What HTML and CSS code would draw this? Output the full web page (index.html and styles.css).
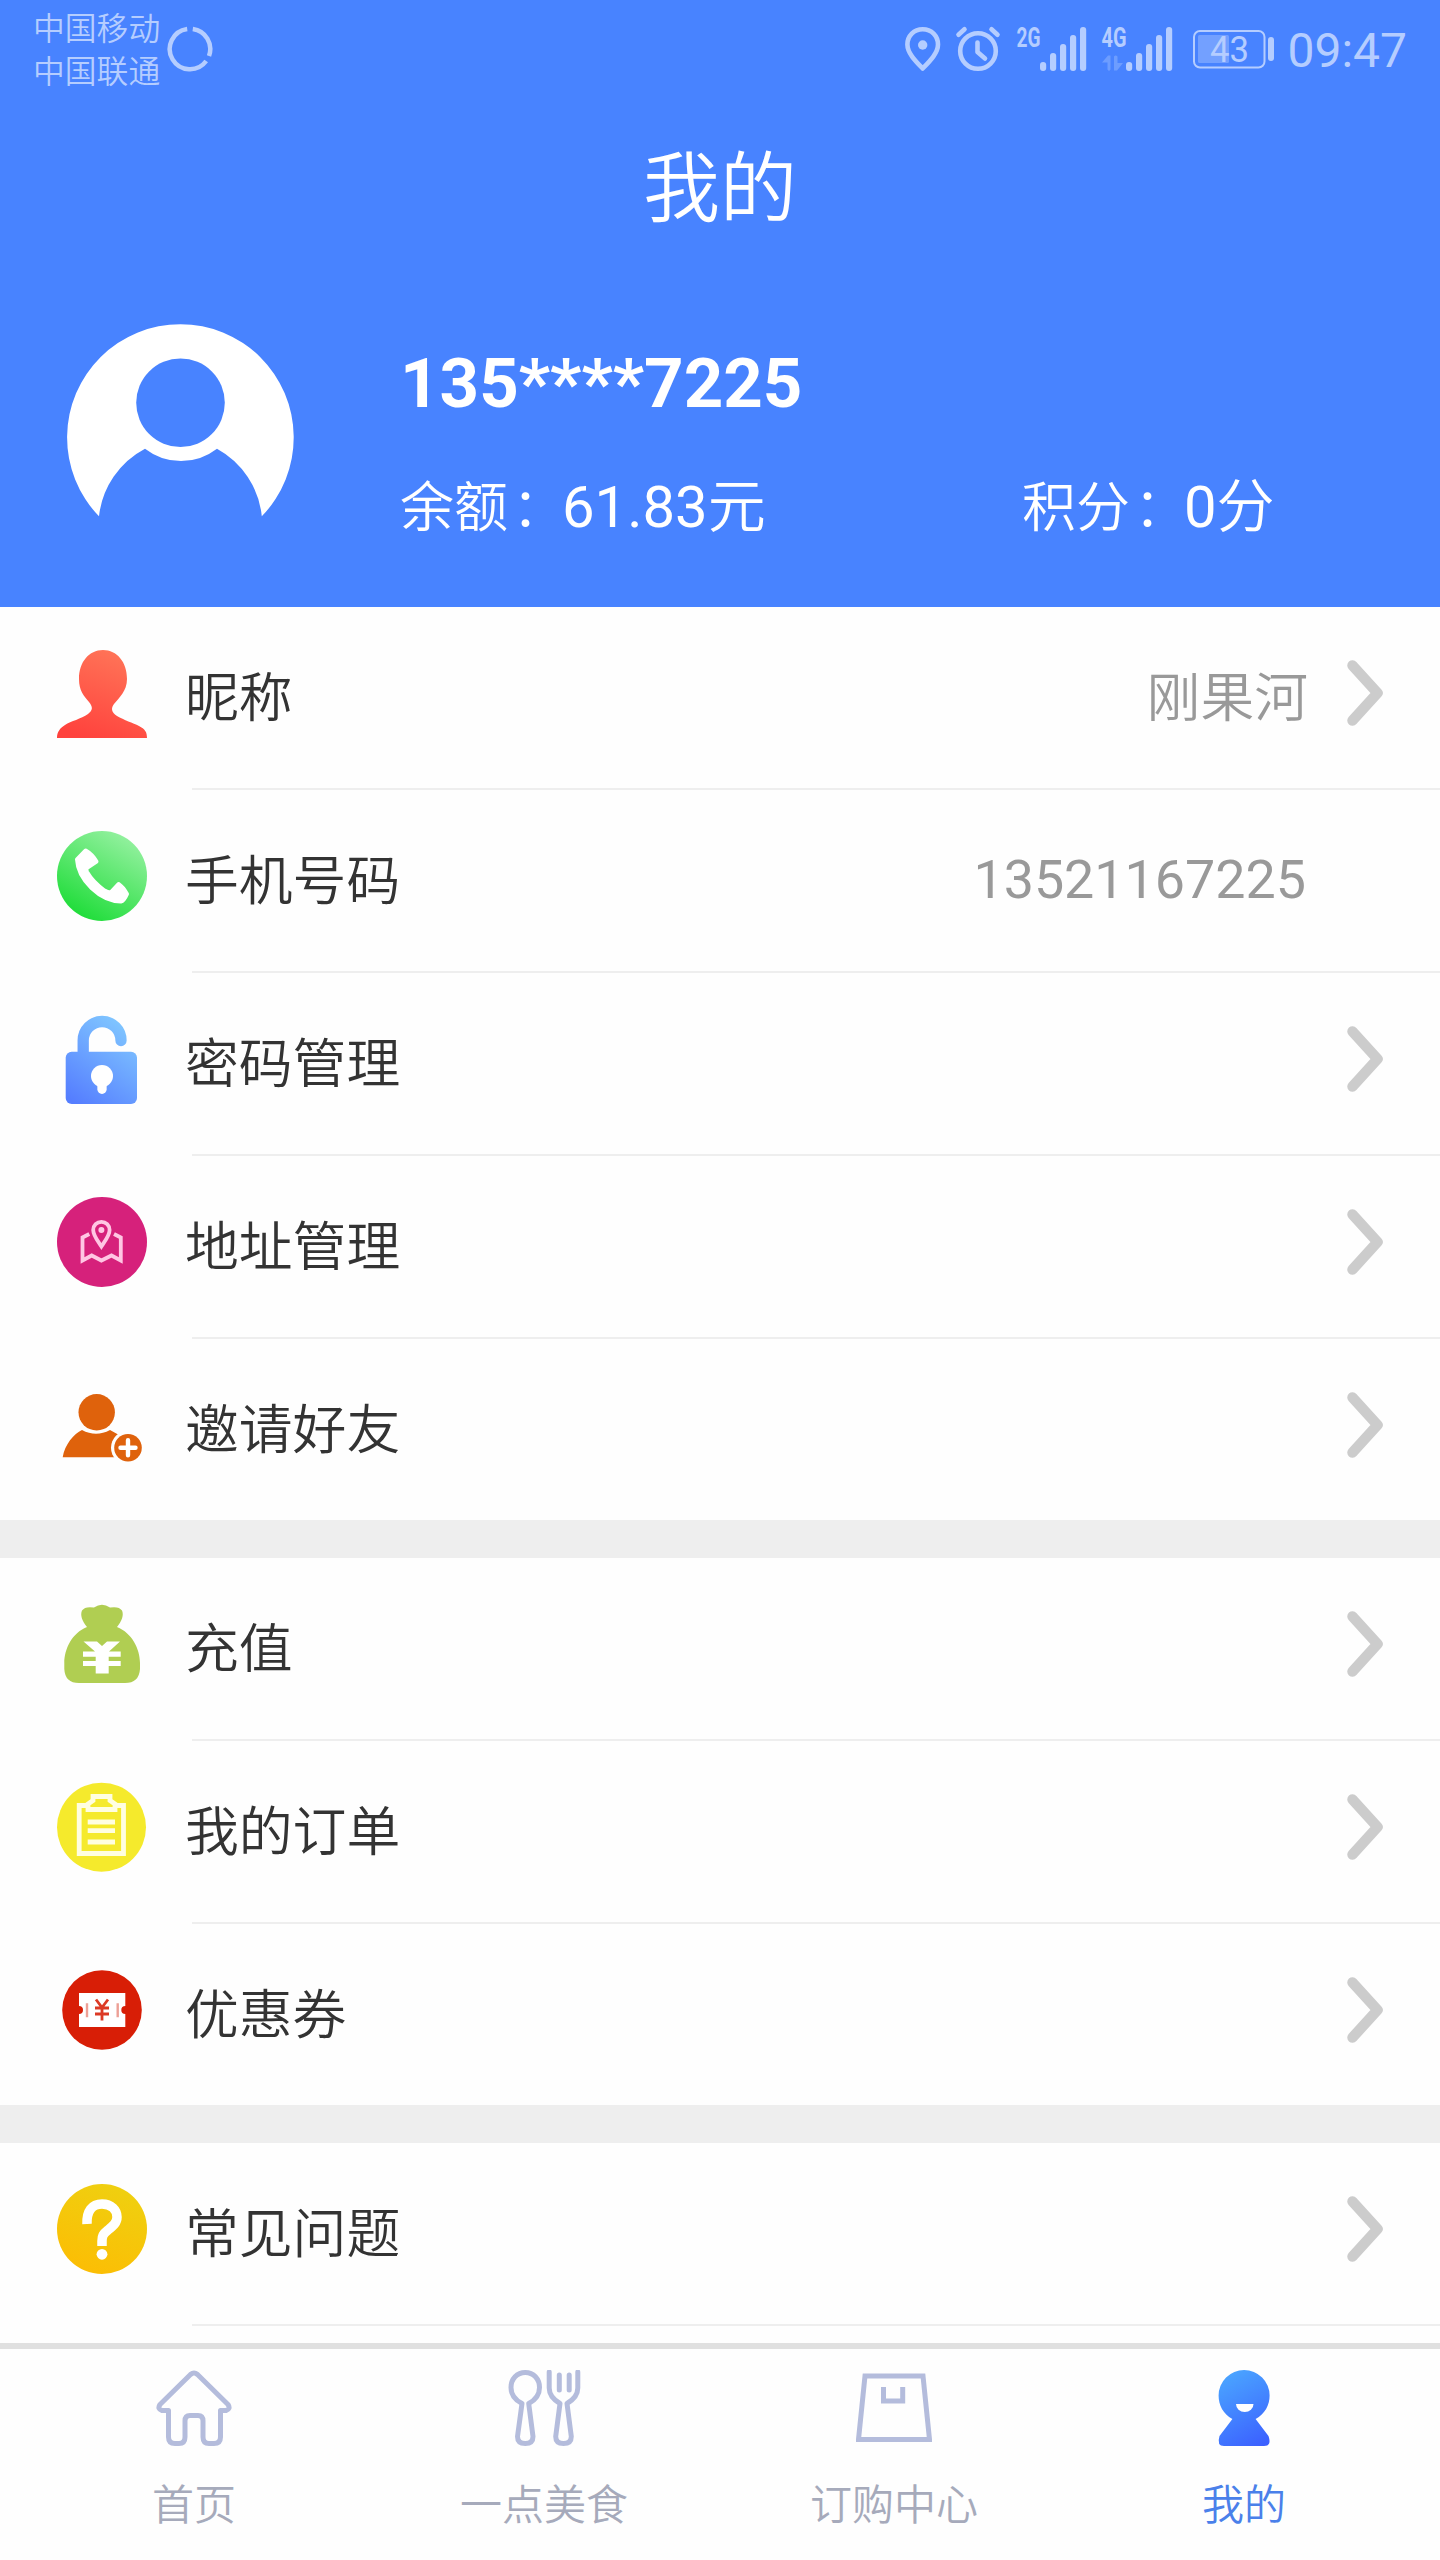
FILE: index.html
```html
<!DOCTYPE html>
<html lang="zh-CN">
<head>
<meta charset="utf-8">
<title>我的</title>
<link rel="stylesheet" href="styles.css">
</head>
<body>
<svg class="defs" width="0" height="0" aria-hidden="true">
  <defs>
    <linearGradient id="red" x1="0.3" y1="1" x2="0.7" y2="0"><stop offset="0" stop-color="#ff423d"/><stop offset="1" stop-color="#ff7558"/></linearGradient>
    <linearGradient id="green" x1="0.25" y1="0.93" x2="0.75" y2="0.07"><stop offset="0" stop-color="#21dd3b"/><stop offset="1" stop-color="#90f09c"/></linearGradient>
    <linearGradient id="blue" gradientUnits="userSpaceOnUse" x1="20" y1="90" x2="75" y2="15"><stop offset="0" stop-color="#557eff"/><stop offset="1" stop-color="#80c6ff"/></linearGradient>
    <linearGradient id="gold" x1="0.3" y1="1" x2="0.7" y2="0"><stop offset="0" stop-color="#fcbd04"/><stop offset="1" stop-color="#efd010"/></linearGradient>
    <linearGradient id="mine" gradientUnits="userSpaceOnUse" x1="18" y1="6" x2="58" y2="76"><stop offset="0" stop-color="#4aa4ff"/><stop offset="1" stop-color="#3b5fff"/></linearGradient>
    <symbol id="bars" viewBox="0 0 47 44">
      <rect x="0" y="35" width="6.2" height="9" rx="3"/><rect x="10" y="26" width="6.2" height="18" rx="3"/><rect x="20" y="17" width="6.2" height="27" rx="3"/><rect x="30" y="8" width="6.2" height="36" rx="3"/><rect x="40" y="0" width="6.2" height="44" rx="3"/>
    </symbol>
    <symbol id="chevron" viewBox="0 0 36 66"><path d="M5.5 5.5L30.5 33L5.5 60.5" fill="none" stroke="#ccc" stroke-width="10.5" stroke-linecap="round" stroke-linejoin="round"/></symbol>
  </defs>
</svg>

<header class="header">
  <div class="status">
    <div class="carriers"><span>中国移动</span><span>中国联通</span></div>
    <svg class="spinner" width="46" height="46" viewBox="-23 -23 46 46"><path d="M2.8 -20A20.2 20.2 0 0 1 19 7M16.2 12A20.2 20.2 0 1 1 -2.8 -20"/></svg>
    <svg class="status-icons" width="370" height="80" viewBox="904 8 370 80">
      <g fill="none" stroke="currentColor" stroke-width="4.6">
        <path d="M922.7 28.3C931.5 28.3 938 35 938 43.500C938 52 930 60 922.700 67.500C915.400 60 907.400 52 907.400 43.500C907.400 35 914 28.300 922.700 28.300Z" stroke-linejoin="round"/>
        <circle cx="978" cy="50" r="17.800"/>
        <path d="M958.500 33.800L964.500 28.200M991.500 28.200L997.500 33.800M977.500 41.500V51L985 57.500" stroke-linecap="round" stroke-linejoin="round"/>
      </g>
      <circle cx="922.700" cy="44" r="4.700" fill="currentColor"/>
      <g fill="currentColor">
        <text class="net" x="1016.500" y="45.700" textLength="24" lengthAdjust="spacingAndGlyphs">2G</text>
        <use href="#bars" x="1040" y="26" width="47" height="44"/>
        <text class="net" x="1101.500" y="45.700" textLength="25" lengthAdjust="spacingAndGlyphs">4G</text>
        <path d="M1102 61.500L1108 54.500H1110.500V68.500Q1109 71 1107.500 68.500V61.500ZM1114 55.500Q1115.500 53.500 1117.500 55.500V62H1123L1117 69.500H1114Z" opacity=".35"/>
        <use href="#bars" x="1126" y="26" width="47" height="44"/>
        <rect x="1198" y="34" width="31" height="28" rx="1.500" opacity=".4"/>
        <text class="charge" x="1210" y="60.700" textLength="39" lengthAdjust="spacingAndGlyphs">43</text>
        <rect x="1268" y="36" width="6" height="24" rx="3"/>
      </g>
      <rect x="1194" y="30" width="70.500" height="36.500" rx="6" fill="none" stroke="currentColor" stroke-width="2"/>
    </svg>
    <time class="clock">09:47</time>
  </div>
  <h1 class="title">我的</h1>
  <section class="profile">
    <svg class="avatar" width="227" height="193" viewBox="0 0 227 193">
      <path fill="#fff" d="M32 192.300A113.300 113.300 0 1 1 194.800 192.300A87 87 0 0 0 150 124.700A58.500 58.500 0 0 1 78 124.700A87 87 0 0 0 32 192.300Z"/>
      <circle class="avatar-head" cx="113.500" cy="78.700" r="44.300"/>
    </svg>
    <div class="account">
      <div class="phone">135****7225</div>
      <div class="figures">
        <div class="figure">余额<span class="colon">：</span><span class="amount"><b>61.83</b>元</span></div>
        <div class="figure">积分<span class="colon">：</span><span class="amount"><b>0</b>分</span></div>
      </div>
    </div>
  </section>
</header>

<main class="menu">
  <section class="group">
    <a class="row">
      <svg class="icon" viewBox="0 0 90 90"><path fill="url(#red)" d="M46 2C60 2 70 14 70 31C70 43 62 50 57 56C54 60 54 64 60 68C67 72 76 75 82 78C88 81 90 84 90 90H0C0 84 3 80 8 77C14 73 24 71 31 66C36 62 36 59 32 54C27 48 22 43 22 31C22 14 32 2 46 2Z"/></svg>
      <span class="label">昵称</span><span class="value">刚果河</span><svg class="go"><use href="#chevron"/></svg>
    </a>
    <a class="row">
      <svg class="icon" viewBox="0 0 90 90"><circle cx="45" cy="45" r="45" fill="url(#green)"/><path fill="#fff" stroke="#fff" stroke-width="4" stroke-linejoin="round" d="M28.700 19.500L20 28.500C21 49 43 70 64 70.500Q67 70 70 63Q66 56 61.500 53L54.500 60.500Q52 62.500 47.500 59.500C40 54 34 48 30 41Q28.500 38 30.500 36.500L39.500 30.500Q35 23 28.700 19.500Z"/></svg>
      <span class="label">手机号码</span><span class="value number">13521167225</span><span class="go"></span>
    </a>
    <a class="row">
      <svg class="icon" viewBox="0 0 90 90"><path d="M26.200 42V26.500A18.900 19 0 0 1 64 26.500" fill="none" stroke="url(#blue)" stroke-width="11.300" stroke-linecap="round"/><rect x="8.700" y="37.700" width="71.300" height="52.300" rx="6" fill="url(#blue)"/><circle cx="45" cy="62" r="11" fill="#fff"/><path d="M45 66V75.300" stroke="#fff" stroke-width="9.300" stroke-linecap="round"/></svg>
      <span class="label">密码管理</span><svg class="go"><use href="#chevron"/></svg>
    </a>
    <a class="row">
      <svg class="icon" viewBox="0 0 90 90"><circle cx="45" cy="45" r="45" fill="#d6217b"/><g fill="none" stroke="#ffc6e3" stroke-width="3.800"><path d="M44.400 49.500C40.500 43.500 36.200 38.500 36.200 33A8.200 8.200 0 0 1 52.600 33C52.600 38.500 48.300 43.500 44.400 49.500Z"/><path d="M32.300 37L25.500 40.500V63.500L34.700 58.500L44.400 63.500L54.500 58.500L63.800 63.500V40.500L57 37"/></g><circle cx="44.400" cy="33" r="3" fill="#ffc6e3"/></svg>
      <span class="label">地址管理</span><svg class="go"><use href="#chevron"/></svg>
    </a>
    <a class="row">
      <svg class="icon" viewBox="0 0 90 90"><g fill="#df620c"><circle cx="39.700" cy="32.300" r="18.200"/><path d="M5.700 77.300C7.500 65 17 53.500 25 50Q39 57.500 53 50L62 55V77.300Z"/></g><circle cx="71" cy="67.700" r="17" fill="#fefefe"/><circle cx="71" cy="67.700" r="13.800" fill="#df620c"/><path d="M63.500 67.700H78.500M71 60.200V75.200" stroke="#fff" stroke-width="4.400" stroke-linecap="round"/></svg>
      <span class="label">邀请好友</span><svg class="go"><use href="#chevron"/></svg>
    </a>
  </section>
  <section class="group">
    <a class="row">
      <svg class="icon" viewBox="0 0 90 90"><path fill="#b0ce52" d="M30 28C25 22 23 16 25 11.500Q28 7 37 8.500Q45 3 53 8.500Q62 7 65 11.500C67 16 65 22 60 28C75 34 83 50 83 64V70Q82 84 68 84H22Q8 84 7.300 70V64C7.300 50 15 34 30 28Z"/><path fill="#fff" d="M26.500 42.500H40L45 47L50 42.500H63L52 52.500H63.700V57.700H51.700V62H63.700V67H51.700V74.500H38.700V67H26V62H38.700V57.700H26V52.500H38Z"/></svg>
      <span class="label">充值</span><svg class="go"><use href="#chevron"/></svg>
    </a>
    <a class="row">
      <svg class="icon" viewBox="0 0 90 90"><circle cx="44.500" cy="45.200" r="44.500" fill="#f5ea2c"/><g fill="none" stroke="#fffee0" stroke-width="4.800"><path d="M30 23.500H22.200V71.500H66.500V23.500H59"/><path d="M36 14.500H53V18.500L58 22V27.500H31V22L36 18.500Z"/><path d="M30.700 40H58M30.700 48.700H58M30.700 60H58"/></g></svg>
      <span class="label">我的订单</span><svg class="go"><use href="#chevron"/></svg>
    </a>
    <a class="row">
      <svg class="icon" viewBox="0 0 90 90"><circle cx="45" cy="45" r="39.800" fill="#d81e06"/><path fill="#fff" d="M22 28H68.300V41A4 4 0 0 0 68.300 49V62H22V49A4 4 0 0 0 22 41Z"/><path d="M30 38.300V52.300M60.700 38.300V52.300" stroke="#eda096" stroke-width="2.400"/><path d="M39 34.500L45 42.500L51 34.500M38 43H52M38 49H52M45 42.500V55.500" fill="none" stroke="#dc3a25" stroke-width="2.800"/></svg>
      <span class="label">优惠券</span><svg class="go"><use href="#chevron"/></svg>
    </a>
  </section>
  <section class="group">
    <a class="row divided">
      <svg class="icon" viewBox="0 0 90 90"><circle cx="45" cy="45" r="45" fill="url(#gold)"/><path d="M30 40C29.500 27 35 20 45 20C54.500 20 60 26 60 33C60 39 56 42 51 46C46 50 45 52 45 57V62" fill="none" stroke="#fff" stroke-width="9.500"/><circle cx="45" cy="70.300" r="5.400" fill="#fff"/></svg>
      <span class="label">常见问题</span><svg class="go"><use href="#chevron"/></svg>
    </a>
  </section>
</main>

<nav class="tabs">
  <a class="tab">
    <svg viewBox="0 0 76 76"><path d="M12.500 40.500H6Q1 39 4 34.500L34.500 4.500Q38 1.500 41.500 4.500L72 34.500Q75 39 70 40.500H64.500V67Q64.500 73.500 58 73.500H53Q47 73.500 47 67V51Q47 45.500 42 45.500H34Q29 45.500 29 51V67Q29 73.500 23 73.500H19Q12.500 73.500 12.500 67Z"/></svg>
    <span>首页</span>
  </a>
  <a class="tab">
    <svg viewBox="0 0 76 76"><path d="M16 33.500C9 30 5 25 5 17.500C5 9 11 2.500 19.300 2.500C27.500 2.500 33.500 9 33.500 17.500C33.500 25 29.500 30 22.700 33.500L27 66.500Q27 73.500 19.300 73.500Q11.500 73.500 11.500 66.500Z"/><path d="M43.200 2V18C43.200 26 48 30 54 33.500L49.700 66.500Q49.700 73.500 57.500 73.500Q65.300 73.500 65.300 66.500L61 33.500C67 30 71.800 26 71.800 18V2M53.300 5V20M63.200 5V20" stroke-linecap="round"/></svg>
    <span>一点美食</span>
  </a>
  <a class="tab">
    <svg viewBox="0 0 76 76"><path d="M9 6H67L73.500 69.500H2.500Z" stroke-linejoin="miter"/><path d="M27.500 17V31H46.700V17" stroke-linejoin="miter"/></svg>
    <span>订购中心</span>
  </a>
  <a class="tab active">
    <svg viewBox="0 0 76 76"><path class="solid" d="M26.400 49C17 44 12.600 35 12.600 25.500A25.500 25.500 0 0 1 63.600 25.500C63.600 35 59 44 49.600 49L62.500 66Q66 76 58 76H18Q10.500 76 13.500 66Z"/><path class="smile" d="M30 34H47.500A8.750 8 0 0 1 30 34Z"/></svg>
    <span>我的</span>
  </a>
</nav>
</body>
</html>
```
FILE: styles.css
```css
* { box-sizing: border-box; }

body {
  margin: 0;
  height: 2560px;
  overflow: hidden;
  display: flex;
  flex-direction: column;
  background: #fefefe;
  font-family: Roboto, "Noto Sans CJK SC", sans-serif;
  font-weight: 350;
  color: #333;
}

.defs { position: absolute; }

.header {
  height: 607px;
  flex: none;
  background: #4883ff;
  color: #fff;
}

.status {
  height: 98px;
  padding: 0 33px;
  display: flex;
  align-items: center;
  color: #b5cdff;
}

.carriers {
  display: flex;
  flex-direction: column;
  padding-top: 3px;
  font-size: 31.8px;
  line-height: 43px;
}

.spinner { margin-left: 7px; fill: none; stroke: #b5cdff; stroke-width: 4.5; }
.status-icons { margin-left: auto; }
.net { font: bold 28px Roboto, sans-serif; }
.charge { font: 36px Roboto, sans-serif; }
.clock { margin-left: 13px; padding-top: 3px; font-size: 48px; line-height: 98px; font-weight: 400; }

.title {
  margin: 0;
  height: 180px;
  padding-top: 2px;
  text-align: center;
  font-size: 77px;
  line-height: 180px;
  font-weight: 350;
}

.profile {
  display: flex;
  padding: 46px 0 0 67px;
}

.avatar { flex: none; }
.avatar-head { fill: #4883ff; }
.account { margin-left: 106px; flex: 1; }

.phone {
  font-size: 69px;
  line-height: 80px;
  font-weight: 700;
  padding-top: 20px;
}

.figures {
  display: grid;
  grid-template-columns: 622px 1fr;
  margin-top: 41px;
}

.figure { font-size: 54px; line-height: 84px; }
.colon { margin: 0 -4px 0 4px; }
.amount { font-size: 58px; }
.amount b { font-weight: 400; }

.group + .group { border-top: 38px solid #eee; }

.row {
  display: flex;
  height: 183px;
  padding: 0 57px;
  background: linear-gradient(#eee, #eee) 192px 100% / 100% 2px no-repeat;
}

.row:last-child:not(.divided) { height: 181px; background: none; }

.icon { width: 90px; height: 90px; margin-top: 41px; flex: none; }
.label { margin-left: 38px; padding-top: 3px; font-size: 53.8px; line-height: 178px; }
.value { margin-left: auto; padding-top: 3px; color: #999; font-size: 53.8px; line-height: 178px; }
.value.number { padding-top: 1px; font-weight: 400; }
.go { width: 36px; height: 66px; margin: 53px 0 0 auto; flex: none; }
.value + .go { margin-left: 39px; }
.number + .go { margin-left: 41px; }

.tabs {
  margin-top: auto;
  height: 217px;
  flex: none;
  display: flex;
  padding: 21px 21px 0 19px;
  border-top: 6px solid #e0e0e0;
}

.tab {
  flex: 1;
  display: flex;
  flex-direction: column;
  align-items: center;
  color: #a6aabb;
  font-size: 42px;
  line-height: 60px;
}

.tab svg {
  width: 76px;
  height: 76px;
  margin-bottom: 30px;
  fill: none;
  stroke: #b4bcdc;
  stroke-width: 5;
  stroke-linejoin: round;
}

.tab.active { color: #4a80ea; }
.tab .solid { fill: url(#mine); stroke: none; }
.tab .smile { fill: #fff; stroke: none; }
```
